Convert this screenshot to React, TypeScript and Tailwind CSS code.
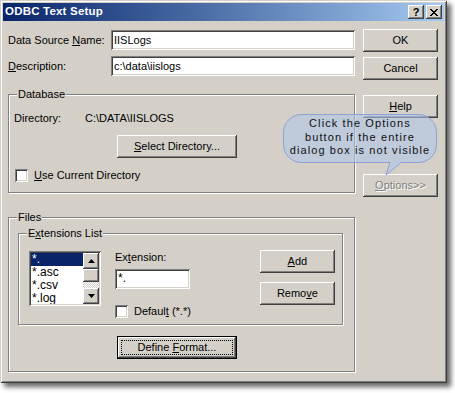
import React from "react";

const raised =
  "bg-[#d4d0c8] shadow-[inset_-1px_-1px_#404040,inset_1px_1px_#fff,inset_-2px_-2px_#808080,inset_2px_2px_#d4d0c8]";
const sunken =
  "bg-white shadow-[inset_1px_1px_#808080,inset_-1px_-1px_#fff,inset_2px_2px_#404040,inset_-2px_-2px_#d4d0c8]";

const U: React.FC<{ children: React.ReactNode }> = ({ children }) => (
  <span className="underline underline-offset-[1px]">{children}</span>
);

const Btn: React.FC<{ className?: string; disabled?: boolean; children: React.ReactNode }> = ({
  className = "",
  disabled,
  children,
}) => (
  <div
    className={`${raised} flex items-center justify-center h-[23px] ${
      disabled ? "text-[#808080] [text-shadow:1px_1px_#fff]" : "text-black"
    } ${className}`}
  >
    <span>{children}</span>
  </div>
);

const Group: React.FC<{ label: React.ReactNode; className?: string; children: React.ReactNode }> = ({
  label,
  className = "",
  children,
}) => (
  <div className={`relative border border-[#808080] shadow-[inset_1px_1px_#fff,1px_1px_#fff] ${className}`}>
    <span className="absolute left-[8px] -top-[8px] bg-[#d4d0c8] px-[1px] leading-[14px]">{label}</span>
    {children}
  </div>
);

const Check: React.FC = () => <div className={`${sunken} w-[13px] h-[13px] shrink-0`} />;

const Arrow: React.FC<{ up?: boolean }> = ({ up }) => (
  <svg width="7" height="4" viewBox="0 0 7 4">
    <path d={up ? "M3.5 0 L7 4 L0 4 Z" : "M0 0 L7 0 L3.5 4 Z"} fill="#000" />
  </svg>
);

export default function App() {
  return (
    <div className="relative w-[455px] h-[393px] bg-white overflow-hidden font-['Liberation_Sans',Arial,sans-serif] text-[11px] text-black">
      <div className="w-[447px] h-[383px] p-[3px] bg-[#d4d0c8] shadow-[inset_1px_1px_#d4d0c8,inset_-1px_-1px_#404040,inset_2px_2px_#fff,inset_-2px_-2px_#808080,4px_4px_5px_rgba(0,0,0,0.6)]">
        {/* title bar */}
        <div className="h-[18px] flex items-center justify-between bg-gradient-to-r from-[#0a246a] to-[#a6caf0] pl-[2px] pr-[2px]">
          <span className="text-white font-bold text-[11.5px] tracking-[0.2px]">ODBC Text Setup</span>
          <div className="flex gap-[2px]">
            <div className={`${raised} w-[16px] h-[14px] flex items-center justify-center font-bold text-[11px] leading-none`}>
              ?
            </div>
            <div className={`${raised} w-[16px] h-[14px] flex items-center justify-center`}>
              <svg width="8" height="7" viewBox="0 0 8 7">
                <path d="M0.5 0 L7.5 7 M1.5 0 L8.5 7 M7.5 0 L0.5 7 M8.5 0 L1.5 7" stroke="#000" strokeWidth="1" transform="translate(-0.5 0)" />
              </svg>
            </div>
          </div>
        </div>

        {/* body */}
        <div className="flex pl-[5px]">
          {/* left column */}
          <div className="w-[348px] flex flex-col">
            <div className="flex items-center mt-[9px] h-[20px]">
              <span className="w-[103px]">
                Data Source <U>N</U>ame:
              </span>
              <div className={`${sunken} w-[244px] h-[20px] flex items-center pl-[3px]`}>IISLogs</div>
            </div>
            <div className="flex items-center mt-[6px] h-[20px]">
              <span className="w-[103px]">
                <U>D</U>escription:
              </span>
              <div className={`${sunken} w-[244px] h-[20px] flex items-center pl-[3px]`}>c:\data\iislogs</div>
            </div>

            <Group label="Database" className="mt-[18px] h-[99px] w-[347px]">
              <div className="flex items-center mt-[17px] ml-[5px] h-[13px]">
                <span className="w-[71px]">Directory:</span>
                <span>C:\DATA\IISLOGS</span>
              </div>
              <Btn className="mt-[10px] ml-[108px] w-[120px] h-[23px]">
                <U>S</U>elect Directory...
              </Btn>
              <div className="flex items-center gap-[6px] mt-[9px] ml-[6px]">
                <Check />
                <span>
                  <U>U</U>se Current Directory
                </span>
              </div>
            </Group>

            <Group label="Files" className="mt-[24px] h-[155px] w-[347px]">
              <Group
                label={
                  <>
                    E<U>x</U>tensions List
                  </>
                }
                className="mt-[15px] ml-[9px] w-[325px] h-[92px]"
              >
                <div className="flex mt-[17px] ml-[10px]">
                  {/* listbox */}
                  <div className={`${sunken} w-[72px] h-[55px] p-[2px] flex`}>
                    <div className="flex-1 flex flex-col text-[12px] leading-[13px] overflow-hidden">
                      <div className="bg-[#0a246a] text-white pl-[1px] h-[13px]">*.</div>
                      <div className="pl-[1px] h-[13px]">*.asc</div>
                      <div className="pl-[1px] h-[13px]">*.csv</div>
                      <div className="pl-[1px] h-[13px]">*.log</div>
                    </div>
                    <div className="w-[16px] flex flex-col">
                      <div className={`${raised} h-[16px] flex items-center justify-center`}>
                        <Arrow up />
                      </div>
                      <div className={`${raised} h-[13px]`} />
                      <div className="flex-1 bg-[repeating-conic-gradient(#fff_0_25%,#d4d0c8_0_50%)] bg-[length:2px_2px]" />
                      <div className={`${raised} h-[16px] flex items-center justify-center`}>
                        <Arrow />
                      </div>
                    </div>
                  </div>

                  {/* extension column */}
                  <div className="flex flex-col ml-[14px]">
                    <span className="leading-[13px]">
                      Ex<U>t</U>ension:
                    </span>
                    <div className={`${sunken} w-[75px] h-[20px] mt-[5px] pl-[3px] text-[12px] leading-[16px] pt-[1px]`}>*.</div>
                    <div className="flex items-center gap-[6px] mt-[14px]">
                      <Check />
                      <span>
                        Defaul<U>t</U> (*.*)
                      </span>
                    </div>
                  </div>

                  {/* add / remove */}
                  <div className="flex flex-col ml-[69px] -mt-[1px]">
                    <Btn className="w-[75px]">
                      <U>A</U>dd
                    </Btn>
                    <Btn className="w-[75px] mt-[9px]">
                      Remo<U>v</U>e
                    </Btn>
                  </div>
                </div>
              </Group>

              <div className="mt-[11px] ml-[108px] w-[120px] h-[23px] border border-black">
                <div className={`${raised} w-full h-full p-[3px]`}>
                  <div className="w-full h-full border border-dotted border-black flex items-center justify-center">
                    <span>
                      Define <U>F</U>ormat...
                    </span>
                  </div>
                </div>
              </div>
            </Group>
          </div>

          {/* right column */}
          <div className="flex flex-col ml-[7px]">
            <Btn className="w-[75px] mt-[8px]">OK</Btn>
            <Btn className="w-[75px] mt-[5px]">Cancel</Btn>
            <Btn className="w-[75px] mt-[15px] h-[22px]">
              <U>H</U>elp
            </Btn>
            <Btn className="w-[75px] mt-[56px] h-[22px]" disabled>
              <U>O</U>ptions&gt;&gt;
            </Btn>
          </div>
        </div>
      </div>

      {/* callout */}
      <div className="absolute left-[283px] top-[114px] w-[154px] h-[62px]">
        <svg width="154" height="62" viewBox="0 0 154 62" className="absolute inset-0">
          <path
            d="M18.5 0.5 H135.5 A18 18 0 0 1 153.5 18.5 V30.5 A18 18 0 0 1 135.5 48.5 H118 L103 61 L107 48.5 H18.5 A18 18 0 0 1 0.5 30.5 V18.5 A18 18 0 0 1 18.5 0.5 Z"
            fill="rgba(176,198,232,0.6)"
            stroke="#8f9fd8"
            strokeWidth="1"
          />
        </svg>
        <div className="relative pt-[3px] text-center text-[11px] leading-[13.5px] tracking-[1.1px] text-[#111]">
          Click the Options
          <br />
          button if the entire
          <br />
          dialog box is not visible
        </div>
      </div>
    </div>
  );
}
